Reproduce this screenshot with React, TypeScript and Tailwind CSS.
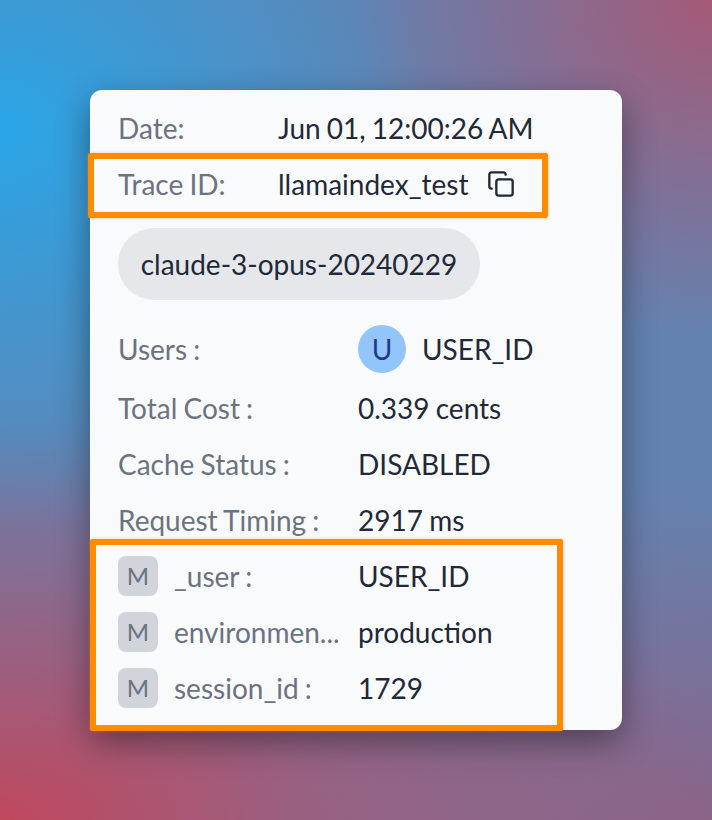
import { Copy } from "lucide-react"

const stats = [
  { label: "Total Cost :", value: "0.339 cents" },
  { label: "Cache Status :", value: "DISABLED" },
  { label: "Request Timing :", value: "2917 ms" },
]

const metadata = [
  { label: "_user :", value: "USER_ID" },
  { label: "environmen...", value: "production" },
  { label: "session_id :", value: "1729" },
]

export default function App() {
  return (
    <div className="h-[820px] w-[712px] overflow-hidden pt-[90px] pl-[90px] font-['Lato',sans-serif] text-[28px] [word-spacing:-1px] bg-[radial-gradient(ellipse_430px_400px_at_0px_130px,#2aa5e6_0%,rgba(42,165,230,0)_100%),radial-gradient(ellipse_360px_340px_at_712px_0px,#a55a76_0%,rgba(165,90,118,0)_100%),radial-gradient(ellipse_720px_400px_at_0px_820px,#c0485e_0%,rgba(192,72,94,0)_100%),radial-gradient(ellipse_420px_340px_at_712px_820px,#8a6488_0%,rgba(138,100,136,0)_100%),linear-gradient(#6382b0,#6382b0)]">
      <div className="relative h-[640px] w-[532px] rounded-xl bg-[#f9fafb] pt-2.5 pl-7 shadow-[0_12px_32px_rgba(0,0,0,0.4)]">
        {/* Date and trace */}
        <div className="flex h-14 items-center">
          <span className="w-40 text-[#6b7280]">Date:</span>
          <span className="text-[#1f2937]">Jun 01, 12:00:26 AM</span>
        </div>
        <div className="flex h-14 items-center">
          <span className="w-40 text-[#6b7280]">Trace ID:</span>
          <span className="text-[#1f2937]">llamaindex_test</span>
          <Copy className="ml-[19px] h-7 w-7 text-[#1f2937]" strokeWidth={2} />
        </div>

        {/* Model chip */}
        <div className="mt-4 flex h-[72px] w-[362px] items-center justify-center rounded-full bg-[#e5e7eb] text-[#1f2937]">
          claude-3-opus-20240229
        </div>

        {/* Users */}
        <div className="mt-[25px] flex h-12 items-center">
          <span className="w-60 text-[#6b7280]">Users :</span>
          <span className="flex h-12 w-12 items-center justify-center rounded-full bg-[#93c5fd] text-[#1e3a8a]">U</span>
          <span className="ml-4 text-[#1f2937]">USER_ID</span>
        </div>

        {/* Stats */}
        <div className="mt-[7px]">
          {stats.map((row) => (
            <div key={row.label} className="flex h-14 items-center">
              <span className="w-60 text-[#6b7280]">{row.label}</span>
              <span className="text-[#1f2937]">{row.value}</span>
            </div>
          ))}
        </div>

        {/* Metadata */}
        {metadata.map((row) => (
          <div key={row.label} className="flex h-14 items-center">
            <span className="flex h-10 w-10 items-center justify-center rounded-lg bg-[#d1d5db] text-2xl text-[#6b7280]">M</span>
            <span className="ml-4 w-[184px] whitespace-nowrap text-[#6b7280]">{row.label}</span>
            <span className="text-[#1f2937]">{row.value}</span>
          </div>
        ))}

        {/* Orange annotation boxes */}
        <div className="absolute top-[63px] -left-[2px] h-[65px] w-[460px] rounded-[2px] border-[6px] border-[#ff8c00] shadow-[0_0_3px_rgba(255,140,0,0.5)]" />
        <div className="absolute top-[449px] left-0 h-[192px] w-[473px] rounded-[2px] border-[6px] border-[#ff8c00] shadow-[0_0_3px_rgba(255,140,0,0.5)]" />
      </div>
    </div>
  )
}
